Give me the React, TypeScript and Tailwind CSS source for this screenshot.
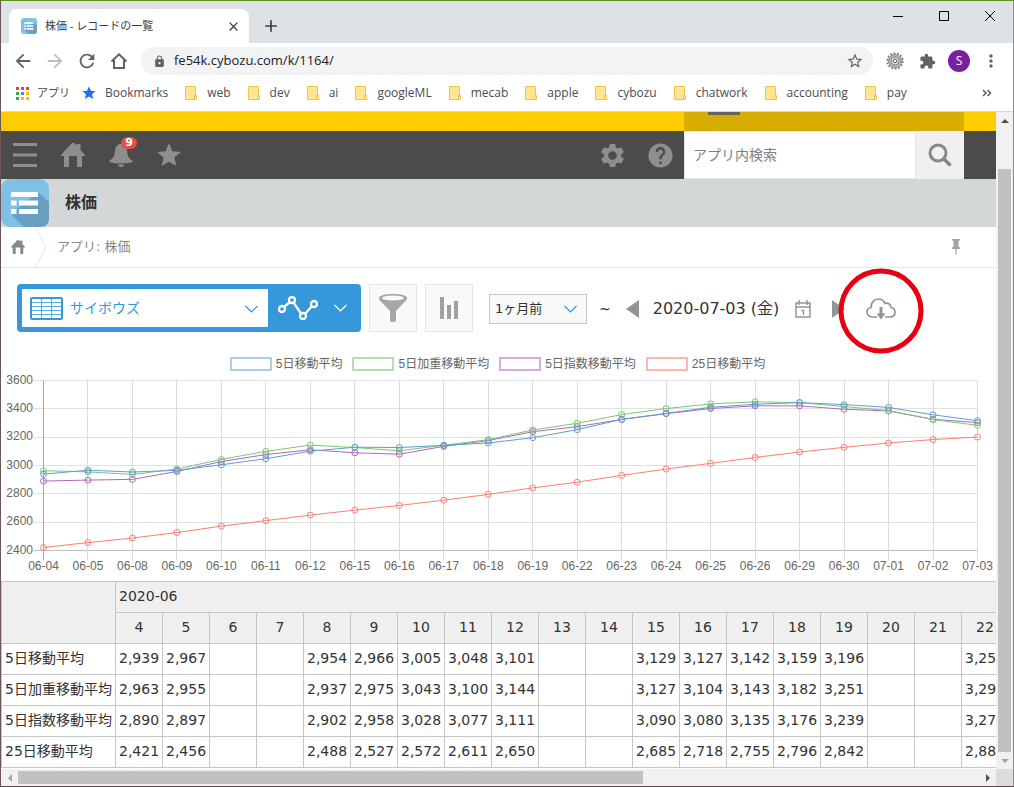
import type { ReactNode } from 'react'
import {
  MdArrowBack,
  MdArrowForward,
  MdRefresh,
  MdLock,
  MdStarBorder,
  MdExtension,
  MdMoreVert,
  MdStar,
  MdSettings,
  MdHelp,
  MdClose,
  MdAdd,
} from 'react-icons/md'

interface Series {
  name: string
  color: string
  legend: string
  values: number[]
}

const DATES = [
  '06-04', '06-05', '06-08', '06-09', '06-10', '06-11', '06-12', '06-15', '06-16', '06-17', '06-18',
  '06-19', '06-22', '06-23', '06-24', '06-25', '06-26', '06-29', '06-30', '07-01', '07-02', '07-03',
]

const SERIES: Series[] = [
  {
    name: '5日移動平均',
    color: '#5f9fd0',
    legend: 'border-[#aecde6]',
    values: [2939, 2967, 2954, 2966, 3005, 3048, 3101, 3129, 3127, 3142, 3159, 3196, 3253, 3326, 3368, 3411, 3432, 3444, 3430, 3410, 3358, 3316],
  },
  {
    name: '5日加重移動平均',
    color: '#7cc67a',
    legend: 'border-[#b4deb2]',
    values: [2963, 2955, 2937, 2975, 3043, 3100, 3144, 3127, 3104, 3143, 3182, 3251, 3298, 3359, 3402, 3435, 3449, 3444, 3416, 3388, 3324, 3284],
  },
  {
    name: '5日指数移動平均',
    color: '#b268b5',
    legend: 'border-[#d6add8]',
    values: [2890, 2897, 2902, 2958, 3028, 3077, 3111, 3090, 3080, 3135, 3176, 3239, 3274, 3325, 3366, 3402, 3421, 3421, 3397, 3385, 3326, 3303],
  },
  {
    name: '25日移動平均',
    color: '#fb8072',
    legend: 'border-[#ffb6ae]',
    values: [2421, 2456, 2488, 2527, 2572, 2611, 2650, 2685, 2718, 2755, 2796, 2842, 2882, 2930, 2975, 3015, 3057, 3095, 3128, 3159, 3183, 3201],
  },
]

const DAYS = Array.from({ length: 19 }, (_, i) => i + 4)

const BOOKMARKS = ['web', 'dev', 'ai', 'googleML', 'mecab', 'apple', 'cybozu', 'chatwork', 'accounting', 'pay']

function valueOn(series: Series, day: number) {
  const index = DATES.indexOf(`06-${String(day).padStart(2, '0')}`)
  return index < 0 ? '' : series.values[index].toLocaleString('en-US')
}

function AppIcon({ className }: { className: string }) {
  return (
    <svg viewBox="0 0 48 48" className={className} aria-hidden="true">
      <rect width="48" height="48" rx="9" fill="#81bfe5" />
      <path d="M37 13L48 23V39Q48 48 39 48H23L10 35Z" fill="#6a9fc4" />
      <path fill="#fff" d="M10 13h27v5H10zM10 21.500h5.500v5H10zM18 21.500h19v5H18zM10 30h5.500v5H10zM18 30h19v5H18z" />
    </svg>
  )
}

function HouseIcon({ className }: { className: string }) {
  return (
    <svg viewBox="0 0 24 24" className={className} fill="currentColor" aria-hidden="true">
      <path d="M0 12L11 0h2l2.500 2.700V1h4v6L24 12v1h-3v11h-5V13H8v11H3V13H0z" />
    </svg>
  )
}

function Chevron({ className }: { className: string }) {
  return (
    <svg viewBox="0 0 13 8" className={className} fill="none" stroke="currentColor" strokeWidth="1.200" aria-hidden="true">
      <path d="M.5 1l6 6 6-6" />
    </svg>
  )
}

function FolderIcon() {
  return (
    <svg viewBox="0 0 12 14" className="h-3.5 w-3" aria-hidden="true">
      <path d="M.5.5h10v9h1v4H.5z" fill="#ffe694" stroke="#ecc546" />
      <path d="M9.500 13V9.500h1" fill="none" stroke="#ecc546" />
    </svg>
  )
}

function IconButton({ label, className = '', children }: { label: string; className?: string; children: ReactNode }) {
  return (
    <button type="button" aria-label={label} className={`flex shrink-0 items-center justify-center ${className}`}>
      {children}
    </button>
  )
}

function TabStrip() {
  return (
    <div className="flex h-[42px] items-end bg-[#dee1e6] pl-2">
      <div className="flex h-[34px] w-60 items-center rounded-t-lg bg-white pr-2 pl-3">
        <AppIcon className="h-4 w-4" />
        <span className="ml-2 flex-1 text-[11px] whitespace-nowrap text-[#3c4043]">株価 - レコードの一覧</span>
        <IconButton label="Close tab" className="h-4 w-4 text-[#3c4043]">
          <MdClose size={15} />
        </IconButton>
      </div>
      <IconButton label="New tab" className="ml-3 h-[34px] w-5 text-[#3c4043]">
        <MdAdd size={20} />
      </IconButton>
      <div className="ml-auto flex self-start text-black">
        <IconButton label="Minimize" className="h-[30px] w-[46px]">
          <svg viewBox="0 0 10 10" className="h-2.5 w-2.5" stroke="currentColor"><path d="M0 5.500h10" /></svg>
        </IconButton>
        <IconButton label="Maximize" className="h-[30px] w-[46px]">
          <svg viewBox="0 0 10 10" className="h-2.5 w-2.5" fill="none" stroke="currentColor"><path d="M.5.5h9v9h-9z" /></svg>
        </IconButton>
        <IconButton label="Close" className="h-[30px] w-[46px]">
          <svg viewBox="0 0 10 10" className="h-2.5 w-2.5" stroke="currentColor"><path d="M0 0l10 10M10 0L0 10" /></svg>
        </IconButton>
      </div>
    </div>
  )
}

function AddressBar() {
  return (
    <div className="flex h-9 items-center px-1.5 text-[#5f6368]">
      <IconButton label="Back" className="h-8 w-8"><MdArrowBack size={22} /></IconButton>
      <IconButton label="Forward" className="h-8 w-8 text-[#bcbec1]"><MdArrowForward size={22} /></IconButton>
      <IconButton label="Reload" className="h-8 w-8"><MdRefresh size={22} /></IconButton>
      <IconButton label="Home" className="h-8 w-8">
        <svg viewBox="0 0 18 18" className="h-[18px] w-[18px]" fill="none" stroke="currentColor" strokeWidth="2">
          <path d="M1.500 9.500L9 2.300l7.500 7.200M4 8v8h10V8" />
        </svg>
      </IconButton>
      <div className="ml-1.5 flex h-7 flex-1 items-center rounded-full bg-[#f1f3f4] pr-2 pl-3">
        <MdLock size={13} />
        <input
          aria-label="Address"
          defaultValue="fe54k.cybozu.com/k/1164/"
          className="ml-2 min-w-0 flex-1 bg-transparent text-[13px] text-[#202124] outline-none"
        />
        <IconButton label="Bookmark this page" className="h-5 w-5"><MdStarBorder size={18} /></IconButton>
      </div>
      <div className="ml-1.5 flex">
        <IconButton label="Gear extension" className="h-8 w-8">
          <svg viewBox="0 0 18 18" className="h-[18px] w-[18px]">
            <circle cx="9" cy="9" r="7.800" fill="none" stroke="#777" strokeWidth="1.600" strokeDasharray="2 1.500" />
            <circle cx="9" cy="9" r="6.500" fill="#b5b5b5" stroke="#888" strokeWidth="1" />
            <circle cx="9" cy="9" r="4" fill="#ddd" stroke="#888" />
            <circle cx="9" cy="9" r="1.700" fill="#fff" stroke="#666" />
          </svg>
        </IconButton>
        <IconButton label="Extensions" className="h-8 w-8"><MdExtension size={17} /></IconButton>
        <IconButton label="Profile" className="h-8 w-8">
          <span className="flex h-[22px] w-[22px] items-center justify-center rounded-full bg-[#7b1fa2] text-xs text-white">S</span>
        </IconButton>
        <IconButton label="Menu" className="h-8 w-8"><MdMoreVert size={20} /></IconButton>
      </div>
    </div>
  )
}

function BookmarkBar() {
  const apps = ['#ea4335', '#ea4335', '#ea4335', '#34a853', '#4285f4', '#fbbc05', '#34a853', '#fbbc05', '#fbbc05']
  return (
    <nav className="flex h-[33px] items-center gap-[17px] border-b border-[#d5d8dc] pr-5 pb-1 pl-[15px] text-xs text-[#4a4d51]">
      <a href="#apps" className="flex items-center gap-2 text-[11px]">
        <svg viewBox="0 0 13 13" className="h-[13px] w-[13px]">
          {apps.map((fill, i) => (
            <rect key={i} x={(i % 3) * 5} y={Math.floor(i / 3) * 5} width="3" height="3" fill={fill} />
          ))}
        </svg>
        アプリ
      </a>
      <a href="#bookmarks" className="-ml-1.5 flex items-center gap-2">
        <MdStar size={16} className="text-[#1a73e8]" />
        Bookmarks
      </a>
      {BOOKMARKS.map((name) => (
        <a key={name} href={`#${name}`} className="flex items-center gap-2.5">
          <FolderIcon />
          {name}
        </a>
      ))}
      <IconButton label="More bookmarks" className="ml-auto h-4 w-3">
        <svg viewBox="0 0 10 8" className="h-2 w-2.5" fill="none" stroke="#5f6368" strokeWidth="1.600">
          <path d="M1 1l3 3-3 3M5.500 1l3 3-3 3" />
        </svg>
      </IconButton>
    </nav>
  )
}

function PortalHeader() {
  return (
    <header>
      <div className="flex h-[19px] justify-end bg-[#fc0] pr-8">
        <div className="w-[280px] bg-[#d6ad00] pl-6">
          <div className="h-[3px] w-8 bg-[#66645e]" />
        </div>
      </div>
      <div className="flex h-12 bg-[#4b4b4b] pr-8 text-[#8e8e8e]">
        <IconButton label="メニュー" className="w-12">
          <svg viewBox="0 0 24 24" className="h-6 w-6" fill="currentColor">
            <path d="M0 0h24v3H0zM0 10.500h24v3H0zM0 21h24v3H0z" />
          </svg>
        </IconButton>
        <IconButton label="ポータル" className="w-12"><HouseIcon className="h-6 w-6" /></IconButton>
        <IconButton label="通知" className="relative w-12">
          <svg viewBox="0 0 24 24" className="h-6 w-6" fill="currentColor">
            <path d="M12 1C8.500 1 6.500 3.500 6 7.500 5.500 13 4.500 15.500.5 17.500V19q5 1.500 11.500 1.500T23.500 19V17.500C19.500 15.500 18.500 13 18 7.500 17.500 3.500 15.500 1 12 1zM9 21.500h6a3 2.500 0 0 1-6 0z" />
          </svg>
          <span className="absolute top-1.5 left-6 flex h-3 w-4 items-center justify-center rounded-full bg-[#e74c3c] text-[11px] font-bold text-white">
            9
          </span>
        </IconButton>
        <IconButton label="ブックマーク" className="w-12">
          <svg viewBox="0 0 24 24" className="h-6 w-6" fill="currentColor">
            <path d="M12 0l3.300 8.300 8.700.6-6.700 5.600 2.200 8.500L12 18.800 4.500 23l2.200-8.500L0 8.900l8.700-.6z" />
          </svg>
        </IconButton>
        <div className="ml-auto flex">
          <IconButton label="設定" className="w-12"><MdSettings size={29} /></IconButton>
          <IconButton label="ヘルプ" className="w-12"><MdHelp size={29} /></IconButton>
          <input
            aria-label="アプリ内検索"
            placeholder="アプリ内検索"
            className="w-[232px] border border-[#e3e7e8] bg-white pl-2 text-sm text-[#333] outline-none placeholder:text-[#808080]"
          />
          <IconButton label="検索" className="w-12 bg-[#f0f0f0]">
            <svg viewBox="0 0 24 24" className="h-6 w-6" fill="none" stroke="#888" strokeWidth="3">
              <circle cx="10" cy="10" r="8" />
              <path d="M15.500 15.500l7 7" strokeWidth="3.500" />
            </svg>
          </IconButton>
        </div>
      </div>
      <div className="flex h-12 items-center bg-[#d4d7d7]">
        <AppIcon className="h-12 w-12" />
        <h1 className="ml-4 text-base font-bold text-[#333]">株価</h1>
      </div>
      <div className="flex h-[41px] items-center border-b border-[#e3e7e8] pr-[34px] text-[#888]">
        <a href="#home" aria-label="ホーム" className="pl-2.5"><HouseIcon className="h-3.5 w-3.5" /></a>
        <svg viewBox="0 0 12 40" className="ml-2.5 h-10 w-3" fill="none" stroke="#e3e7e8" aria-hidden="true">
          <path d="M.5 0l10.500 20L.5 40" />
        </svg>
        <a href="#app" className="ml-2.5 text-[13px]">アプリ: 株価</a>
        <IconButton label="固定" className="ml-auto h-4 w-3 text-[#a0a4a4]">
          <svg viewBox="0 0 10 16" className="h-4 w-2.5" fill="currentColor">
            <path d="M1 0h8v1.500H7.500v6L9 8.500V10H5.700l-.3 6h-.8l-.3-6H1V8.500l1.500-1v-6H1z" />
          </svg>
        </IconButton>
      </div>
    </header>
  )
}

function ViewToolbar() {
  return (
    <div className="flex items-center pt-4 pl-4 text-[#333]">
      <div className="flex h-12 w-[344px] rounded bg-[#3498db] p-[5px] pr-0">
        <label className="relative flex flex-1 items-center bg-white pl-2">
          <svg viewBox="0 0 33 23" className="h-[23px] w-[33px]" fill="none" stroke="#3498db" aria-hidden="true">
            <rect x="1" y="1" width="31" height="21" rx="1" strokeWidth="2" />
            <path d="M2 5.500h29M2 9.500h29M2 13.500h29M2 17.500h29M11.500 2v19M21.500 2v19" strokeWidth=".8" />
          </svg>
          <select aria-label="ビュー" className="h-full flex-1 appearance-none pl-[7px] text-sm text-[#3498db] outline-none">
            <option>サイボウズ</option>
          </select>
          <Chevron className="pointer-events-none absolute top-4 right-2.5 h-2 w-[13px] text-[#3498db]" />
        </label>
        <button type="button" aria-label="グラフ" className="flex w-[93px] items-center gap-4 pl-2.5 text-white">
          <svg viewBox="0 0 40 24" className="h-6 w-10" fill="none" stroke="currentColor" strokeWidth="2.300">
            <circle cx="4" cy="13" r="3" />
            <circle cx="14" cy="4" r="3" />
            <circle cx="25" cy="20" r="3" />
            <circle cx="36" cy="8" r="3" />
            <path d="M6 11l6-5M15.500 6.500l7.500 11M27 18l7-8" />
          </svg>
          <Chevron className="h-2 w-[13px]" />
        </button>
      </div>
      <IconButton label="絞り込み" className="ml-2 h-12 w-12 border border-[#e3e7e8] bg-[#f7f9fa]">
        <svg viewBox="0 0 28 28" className="h-7 w-7" fill="#a6a6a6">
          <path d="M0 4C0 1.500 6 0 14 0s14 1.500 14 4c0 1.500-1 2.500-2 3.500L17 17v9q0 2-3 2t-3-2v-9L2 7.500C1 6.500 0 5.500 0 4z" />
          <ellipse cx="14" cy="4" rx="11" ry="2.500" fill="#f7f9fa" />
        </svg>
      </IconButton>
      <IconButton label="グラフを作成" className="ml-2 h-12 w-12 border border-[#e3e7e8] bg-[#f7f9fa]">
        <svg viewBox="0 0 18 22" className="h-[22px] w-[18px]" fill="#a0a0a0">
          <path d="M0 0h4v22H0zM7 8h4v14H7zM14 4h4v18h-4z" />
        </svg>
      </IconButton>
      {/* date range */}
      <div className="ml-4 flex items-center pt-0.5">
        <label className="relative h-[30px] w-[98px]">
          <select aria-label="期間" className="h-full w-full appearance-none border border-[#c4c7c7] bg-[#f7f9fa] pl-[5px] text-[13px] outline-none">
            <option>1ヶ月前</option>
          </select>
          <Chevron className="pointer-events-none absolute top-[11px] right-2.5 h-2 w-[13px] text-[#3498db]" />
        </label>
        <span className="ml-3 text-sm">~</span>
        <IconButton label="前の日" className="ml-[15px] h-[46px]">
          <svg viewBox="0 0 13 18" className="h-[18px] w-[13px]" fill="#8f9693"><path d="M13 0v18L0 9z" /></svg>
        </IconButton>
        <span className="ml-3.5 text-base whitespace-nowrap">2020-07-03 (金)</span>
        <IconButton label="日付を選択" className="ml-4 h-[46px]">
          <svg viewBox="0 0 16 18" className="h-[18px] w-4" fill="none" stroke="#8f9693">
            <path d="M1 3h14v14H1zM1 7h14" strokeWidth="1.500" />
            <path d="M4 0v5M12 0v5" strokeWidth="1.500" />
            <path d="M6.500 10.500h2V15" strokeWidth="1.400" />
          </svg>
        </IconButton>
        <IconButton label="次の日" className="ml-[21px] h-[46px]">
          <svg viewBox="0 0 13 18" className="h-[18px] w-[13px]" fill="#8f9693"><path d="M0 0v18l13-9z" /></svg>
        </IconButton>
        <IconButton label="ダウンロード" className="relative ml-[21px] h-[46px]">
          <svg viewBox="0 0 30 22" className="h-[22px] w-[30px]" fill="none" stroke="#8f9693" strokeWidth="1.700">
            <path d="M11 19H6.500C3.500 19 1 17 1 14c0-2.500 1.500-4 4-4.500C5 4.500 8 1 12.500 1c3.500 0 5.500 2 6.500 4.500 3-1 6 1 6 4 2.500.5 4 2.500 4 4.700 0 3-2 4.800-5 4.800H19" />
            <path d="M15 9v8" strokeWidth="3" />
            <path d="M10.500 15.500h9L15 21.500z" fill="#8f9693" stroke="none" />
          </svg>
          <svg viewBox="0 0 86 86" className="pointer-events-none absolute -top-[18px] -left-7 h-[86px] w-[86px] max-w-none" fill="none" stroke="#e60012" strokeWidth="5">
            <circle cx="43" cy="43" r="40" />
          </svg>
        </IconButton>
      </div>
    </div>
  )
}

function LineChart() {
  const x = (i: number) => 42.5 + (i * 934) / (DATES.length - 1)
  const y = (v: number) => 179.5 - ((v - 2400) * 170) / 1200
  const ticks = [3600, 3400, 3200, 3000, 2800, 2600, 2400]

  return (
    <div className="pt-[25px]">
      <ul className="flex h-3.5 items-center justify-center gap-2.5 pr-0.5 text-xs text-[#666]">
        {SERIES.map((s) => (
          <li key={s.name} className="flex items-center gap-1">
            <span className={`h-3.5 w-[42px] border-2 ${s.legend}`} />
            {s.name}
          </li>
        ))}
      </ul>
      <svg viewBox="0 0 995 210" className="block h-auto w-full" role="img" aria-label="移動平均">
        {ticks.map((t) => (
          <g key={t}>
            <path d={`M33 ${Math.floor(y(t)) + 0.5}H976.500`} stroke={t === 2400 ? '#c0c0c0' : '#e0e0e0'} />
            <text x="32" y={y(t) + 3} textAnchor="end" fontSize="12" fill="#666">{t}</text>
          </g>
        ))}
        {DATES.map((d, i) => (
          <g key={d}>
            <path d={`M${Math.floor(x(i)) + 0.5} 9.500V189.500`} stroke={i === 0 ? '#a8a8a8' : '#dcdcdc'} />
            <text x={x(i)} y="199" textAnchor="middle" fontSize="12" fill="#666">{d}</text>
          </g>
        ))}
        {[...SERIES].reverse().map((s) => (
          <g key={s.name} stroke={s.color} fill="none">
            <polyline points={s.values.map((v, i) => `${x(i)},${y(v)}`).join(' ')} />
            {s.values.map((v, i) => (
              <circle key={i} cx={x(i)} cy={y(v)} r="3" />
            ))}
          </g>
        ))}
      </svg>
    </div>
  )
}

function DataTable() {
  return (
    <div className="overflow-hidden">
      <table className="w-max border-collapse text-sm leading-5 text-[#333]">
        <thead className="bg-[#efefef]">
          <tr className="h-[31px]">
            <td rowSpan={2} className="border border-[#c6c6c6]" />
            <th colSpan={DAYS.length} className="border border-[#c6c6c6] px-[3px] pb-0.5 text-left font-normal">2020-06</th>
          </tr>
          <tr className="h-[31px]">
            {DAYS.map((day) => (
              <th key={day} className="w-[47px] min-w-[47px] border border-[#c6c6c6] pb-0.5 font-normal">{day}</th>
            ))}
          </tr>
        </thead>
        <tbody>
          {SERIES.map((s) => (
            <tr key={s.name} className="h-[31px]">
              <th className="w-[114px] min-w-[114px] border border-[#c6c6c6] pb-0.5 pl-[3px] text-left font-normal whitespace-nowrap">{s.name}</th>
              {DAYS.map((day) => (
                <td key={day} className="border border-[#c6c6c6] pb-0.5 pl-[3px]">{valueOn(s, day)}</td>
              ))}
            </tr>
          ))}
        </tbody>
      </table>
    </div>
  )
}

function Arrow({ d, fill }: { d: string; fill: string }) {
  return (
    <span className="flex h-[17px] w-[17px] shrink-0 items-center justify-center">
      <svg viewBox="0 0 8 8" className="h-2 w-2" fill={fill}><path d={d} /></svg>
    </span>
  )
}

export default function App() {
  return (
    <div className="flex min-h-screen flex-col border border-t-[#5a8f1c] border-r-[#8a8a8a] border-b-[#5a4a4d] border-l-[#6b5557] bg-white font-['Open_Sans','Noto_Sans_CJK_JP',sans-serif]">
      <TabStrip />
      <AddressBar />
      <BookmarkBar />
      <div className="flex flex-1">
        <div className="flex min-w-0 flex-1 flex-col font-['DejaVu_Sans','Noto_Sans_CJK_JP',sans-serif]">
          <PortalHeader />
          <main className="flex-1">
            <ViewToolbar />
            <div className="font-['Liberation_Sans','Noto_Sans_CJK_JP',sans-serif]">
              <LineChart />
            </div>
            <DataTable />
          </main>
          <div className="flex h-[17px] items-center bg-[#f1f1f1]">
            <Arrow d="M6 0v8L2 4z" fill="#a3a3a3" />
            <div className="flex-1">
              <div className="h-[13px] w-[65%] bg-[#c1c1c1]" />
            </div>
            <Arrow d="M2 0v8l4-4z" fill="#505050" />
          </div>
        </div>
        <div className="flex w-[17px] flex-col items-center bg-[#f1f1f1]">
          <Arrow d="M0 6h8L4 2z" fill="#505050" />
          <div className="mt-10 w-[13px] flex-1 bg-[#c1c1c1]" />
          <Arrow d="M0 2h8L4 6z" fill="#a3a3a3" />
          <div className="h-[17px] w-full bg-[#dcdcdc]" />
        </div>
      </div>
    </div>
  )
}
